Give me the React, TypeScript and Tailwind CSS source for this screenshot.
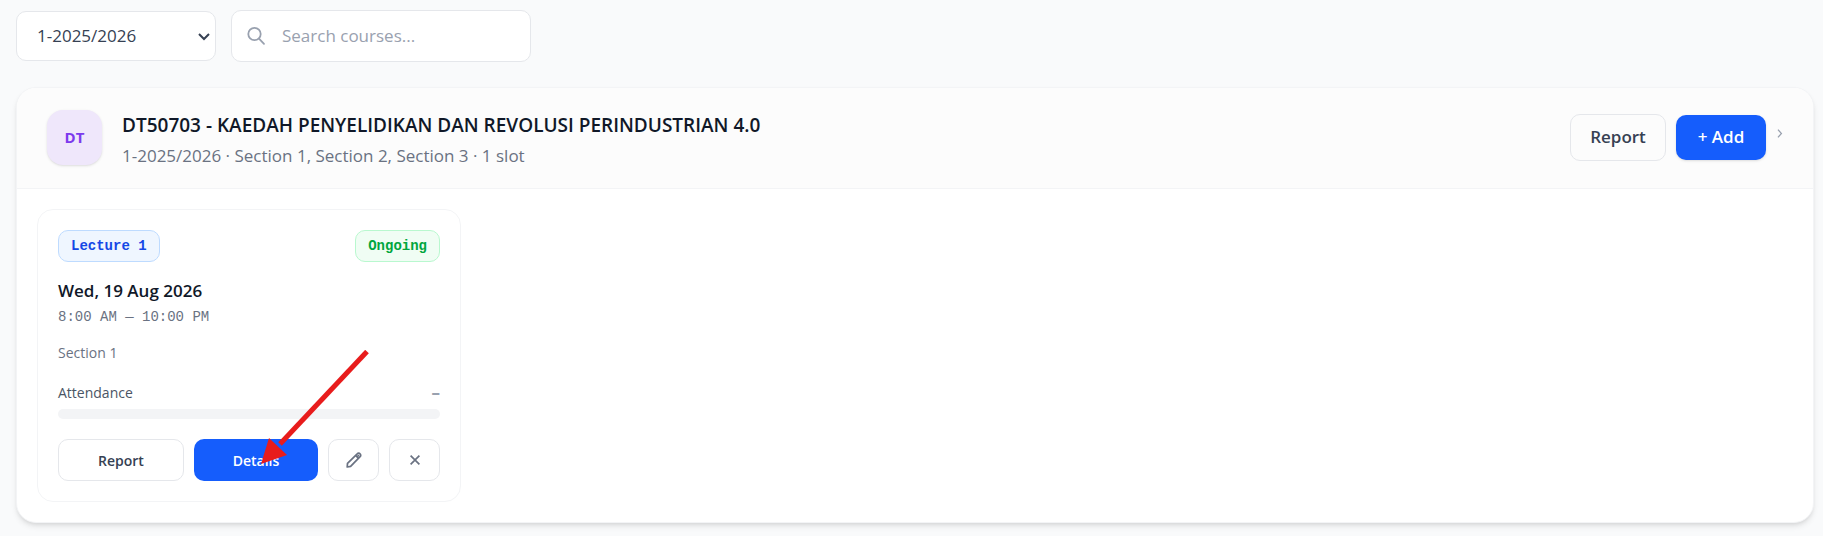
import React from "react";

interface ActionButtonProps {
    className?: string;
    label?: string;
    children: React.ReactNode;
}

const OutlineButton: React.FC<ActionButtonProps> = ({ className = "", label, children }) => {
    return (
        <button
            type="button"
            aria-label={label}
            className={`flex items-center justify-center rounded-[10px] border border-gray-200 font-semibold ${className}`}
        >
            {children}
        </button>
    );
};

const PrimaryButton: React.FC<ActionButtonProps> = ({ className = "", children }) => {
    return (
        <button
            type="button"
            className={`flex items-center justify-center rounded-[10px] bg-[#155dfc] font-semibold text-white ${className}`}
        >
            {children}
        </button>
    );
};

const Toolbar: React.FC = () => {
    return (
        <div className="flex items-center gap-[15px]">
            <div className="relative">
                <select
                    aria-label="Semester"
                    defaultValue="1-2025/2026"
                    className="block h-[50px] w-[200px] appearance-none rounded-[10px] border border-gray-200 bg-white px-5 text-[17px] text-gray-700 outline-none"
                >
                    <option>1-2025/2026</option>
                </select>
                <svg className="pointer-events-none absolute top-5 right-[6px] h-3 w-3" viewBox="0 0 12 12" fill="none" stroke="#364153" strokeWidth="2">
                    <path d="M1 3l5 5 5-5" />
                </svg>
            </div>
            <label className="flex h-[52px] w-[300px] items-center gap-4 rounded-[10px] border border-gray-200 bg-white px-[14px]">
                <svg className="h-5 w-5 shrink-0" viewBox="0 0 20 20" fill="none" stroke="#99a1af" strokeWidth="1.8" strokeLinecap="round">
                    <circle cx="8.5" cy="8" r="6.2" />
                    <path d="M13 12.6L18 17.8" />
                </svg>
                <input
                    type="text"
                    aria-label="Search courses"
                    placeholder="Search courses..."
                    className="min-w-0 flex-1 bg-transparent text-[17px] outline-none placeholder:text-gray-400"
                />
            </label>
        </div>
    );
};

const LectureCard: React.FC = () => {
    return (
        <article className="relative rounded-2xl border border-gray-100 bg-white p-5">
            <div className="flex items-center justify-between">
                <span className="flex h-8 items-center rounded-[10px] border border-[#bedbff] bg-[#eff6ff] px-3 font-['Liberation_Mono',monospace] text-[14px] font-bold text-[#1447e6]">
                    Lecture 1
                </span>
                <span className="flex h-8 items-center rounded-[10px] border border-[#b9f8cf] bg-[#f0fdf4] px-3 font-['Liberation_Mono',monospace] text-[14px] font-bold text-[#00a63e]">
                    Ongoing
                </span>
            </div>
            <h3 className="mt-[17px] text-[17px] leading-6 font-semibold text-gray-900">Wed, 19 Aug 2026</h3>
            <p className="mt-1 font-['Liberation_Mono',monospace] text-[14px] leading-5 text-gray-500">8:00 AM — 10:00 PM</p>
            <p className="mt-4 text-[14px] leading-5 text-gray-500">Section 1</p>
            <div className="mt-5 flex items-center justify-between text-[14px] leading-5">
                <span className="text-gray-600">Attendance</span>
                <span className="text-[17px] font-bold text-gray-400">–</span>
            </div>
            <div className="mt-[6px] h-[10px] rounded-full bg-gray-100" />
            <div className="mt-5 flex gap-[10px]">
                <OutlineButton className="h-[42px] flex-1 text-[14px] text-gray-700">Report</OutlineButton>
                <PrimaryButton className="h-[42px] flex-1 text-[14px]">Details</PrimaryButton>
                <OutlineButton label="Edit" className="h-[42px] w-[51px]">
                    <svg className="h-4 w-4" viewBox="0 0 16 16" fill="none" stroke="#6a7282" strokeWidth="1.7" strokeLinejoin="round">
                        <path d="M1.2 15l.3-3.6L11.2 1.8a2 2 0 0 1 2.9 0 2 2 0 0 1 0 2.9L4.6 14.4z" />
                        <path d="M9.6 3.4l2.9 2.9M11.6 4.4l1.4-1.4" />
                    </svg>
                </OutlineButton>
                <OutlineButton label="Remove" className="h-[42px] w-[51px]">
                    <svg className="h-[10px] w-[10px]" viewBox="0 0 10 10" fill="none" stroke="#6a7282" strokeWidth="1.7">
                        <path d="M.6.6l8.8 8.8M9.4.6L.6 9.4" />
                    </svg>
                </OutlineButton>
            </div>
            <svg className="pointer-events-none absolute top-[140px] right-[91px] h-[116px] w-[108px]" viewBox="0 0 108 116" fill="#e81c1c">
                <path d="M106 1.5L19 94" stroke="#e81c1c" strokeWidth="5" />
                <path d="M0 114L8 88 26 105z" />
            </svg>
        </article>
    );
};

const CourseSection: React.FC = () => {
    return (
        <section className="mt-[25px] overflow-hidden rounded-[20px] border border-gray-100 bg-white shadow-md">
            <header className="flex items-center border-b border-gray-100 bg-[#fcfcfc] pt-[17px] pr-[30px] pb-[19px] pl-[30px]">
                <div className="flex h-[55px] w-[55px] items-center justify-center rounded-2xl bg-[#efe7fb] text-[15px] font-bold text-[#7c3aed] shadow-sm">
                    DT
                </div>
                <div className="ml-5 flex-1 pt-[6px]">
                    <h2 className="text-[19px] leading-7 font-semibold text-gray-900">DT50703 - KAEDAH PENYELIDIKAN DAN REVOLUSI PERINDUSTRIAN 4.0</h2>
                    <p className="mt-1 text-[17px] leading-[26px] text-gray-500">1-2025/2026 · Section 1, Section 2, Section 3 · 1 slot</p>
                </div>
                <OutlineButton className="h-[47px] w-24 text-[17px] text-gray-700">Report</OutlineButton>
                <PrimaryButton className="ml-[10px] h-[45px] w-[90px] text-[17px] shadow-sm">+ Add</PrimaryButton>
                <svg className="mb-2 ml-[11px] h-[9px] w-[6px]" viewBox="0 0 6 9" fill="none" stroke="#99a1af" strokeWidth="1.3">
                    <path d="M1 .6l3.4 3.9L1 8.4" />
                </svg>
            </header>
            <div className="grid grid-cols-4 gap-5 p-5">
                <LectureCard />
            </div>
        </section>
    );
};

export default function App() {
    return (
        <main className="min-h-screen bg-gray-50 pt-[10px] pr-[9px] pb-3 pl-4 font-['Open_Sans','Noto_Sans',sans-serif]">
            <Toolbar />
            <CourseSection />
        </main>
    );
}
